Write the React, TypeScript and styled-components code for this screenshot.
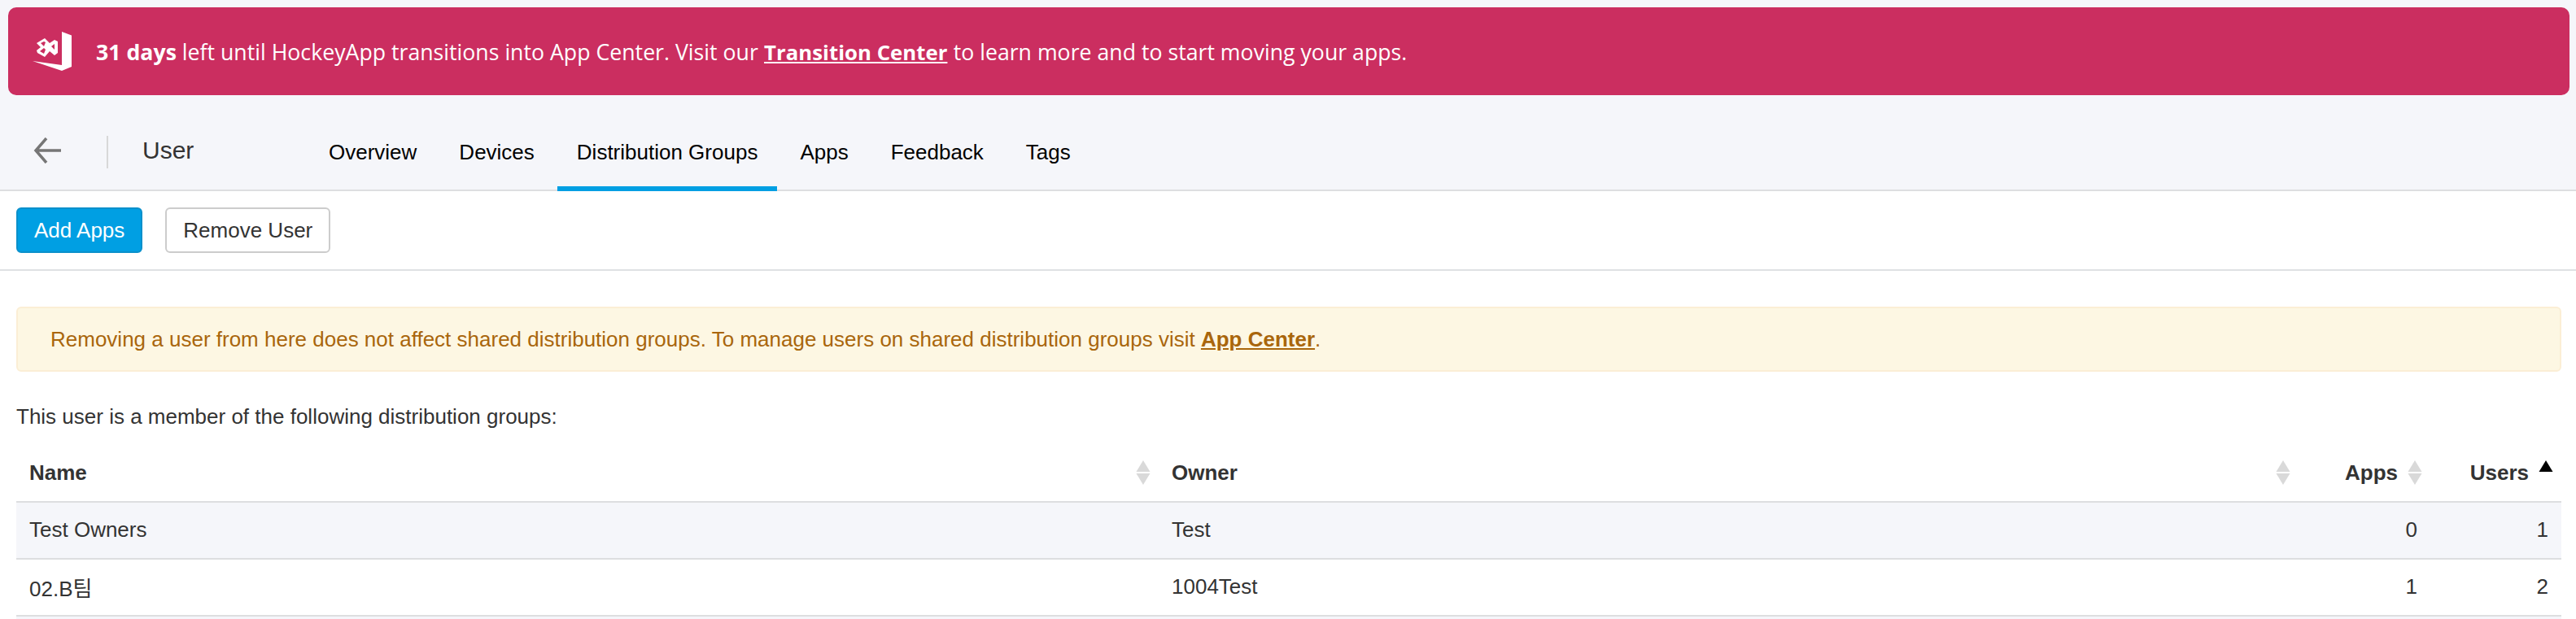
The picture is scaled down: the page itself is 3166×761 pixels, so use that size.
import React from 'react';
import styled, { createGlobalStyle } from 'styled-components';

const Global = createGlobalStyle`
  html, body { margin: 0; padding: 0; background: #fff; }
  body { font-family: "Liberation Sans", Arial, "Noto Sans CJK KR", sans-serif; font-size: 26px; color: #333; overflow: hidden; }
`;
const Top = styled.div`
  background: #f5f6fa;
  border-bottom: 2px solid #dddee0;
  height: 235px;
  padding: 9px 8px 0 10px;
  box-sizing: border-box;
`;
const Banner = styled.div`
  height: 108px;
  background: #cb2e60;
  border-radius: 10px;
  display: flex;
  align-items: center;
  padding-left: 30px;
  color: #fff;
  font-family: "Open Sans", sans-serif;
  font-size: 26.7px;
  a { color: #fff; font-size: 25.8px; font-weight: 700; text-decoration: underline; margin: 0 0.28em; }
  b { font-weight: 700; }
`;
const Logo = styled.svg`
  width: 48px;
  height: 48px;
  margin-right: 30px;
  flex: none;
`;
const Nav = styled.nav`
  display: flex;
  align-items: flex-start;
  height: 100px;
  margin: 18px -8px 0 -10px;
`;
const Back = styled.div`
  width: 131px;
  height: 100px;
  padding: 34px 0 0 41px;
  box-sizing: border-box;
  color: #767676;
  svg { display: block; }
`;
const Title = styled.div`
  width: 249px;
  height: 40px;
  margin-top: 32px;
  padding-left: 42px;
  box-sizing: border-box;
  border-left: 2px solid #d8d8d8;
  font-size: 30px;
  line-height: 36px;
  color: #333;
`;
const Tab = styled.a<{ $active?: boolean }>`
  display: block;
  padding: 37px 24px 0;
  margin-right: 4px;
  font-size: 26px;
  color: #000;
  line-height: 30px;
  height: 100px;
  box-sizing: border-box;
  border-bottom: 6px solid ${p => (p.$active ? '#009fe3' : 'transparent')};
`;
const Toolbar = styled.div`
  display: flex;
  gap: 28px;
  padding: 20px;
  height: 98px;
  box-sizing: border-box;
  border-bottom: 2px solid #dfe1e3;
`;
const Btn = styled.button<{ $primary?: boolean }>`
  height: 56px;
  padding: 0 20px;
  border-radius: 6px;
  font: 26px "Liberation Sans", sans-serif;
  background: ${p => (p.$primary ? '#009fe3' : '#fff')};
  color: ${p => (p.$primary ? '#fff' : '#333')};
  border: 2px solid ${p => (p.$primary ? '#0b90cb' : '#ccc')};
`;
const Body = styled.div`
  padding: 44px 18px 0 20px;
`;
const Alert = styled.div`
  height: 80px;
  box-sizing: border-box;
  background: #fdf7e3;
  border: 2px solid #fbeed5;
  border-radius: 6px;
  color: #a9660c;
  padding-left: 40px;
  line-height: 76px;
  a { color: #a9660c; font-weight: 700; text-decoration: underline; }
`;
const Intro = styled.p`
  margin: 40px 0 0;
  line-height: 30px;
  height: 59px;
`;
const Table = styled.table`
  width: 100%;
  table-layout: fixed;
  border-collapse: separate;
  border-spacing: 0;
`;
const Th = styled.th<{ $w?: number; $right?: boolean }>`
  width: ${p => (p.$w ? p.$w + 'px' : 'auto')};
  height: 62px;
  box-sizing: border-box;
  padding: 0 ${p => (p.$right ? '40px' : '16px')} 10px 16px;
  text-align: ${p => (p.$right ? 'right' : 'left')};
  position: relative;
  font-weight: 700;
  border-bottom: 2px solid #dddee0;
`;
const Td = styled.td<{ $right?: boolean }>`
  height: 70px;
  box-sizing: border-box;
  padding: 0 16px 2px;
  text-align: ${p => (p.$right ? 'right' : 'left')};
  border-bottom: 2px solid #dddee0;
`;
const Tr = styled.tr<{ $alt?: boolean }>`
  background: ${p => (p.$alt ? '#f5f6fa' : '#fff')};
`;
const Filler = styled.td`
  height: 3px;
  padding: 0;
  background: #f5f6fa;
`;
const SortIcon = styled.svg`
  position: absolute;
  right: 10px;
  top: 10px;
  width: 18px;
  height: 32px;
`;

const Sort = ({ up }: { up?: boolean }) => (
  <SortIcon viewBox="0 0 18 32">
    <path d="M9 0 L17.5 14 H.5 Z" fill={up ? '#000' : '#d9d9d9'} />
    {!up && <path d="M.5 16 H17.5 L9 30 Z" fill="#d9d9d9" />}
  </SortIcon>
);

export default function App() {
  return (
    <>
      <Global />
      <Top>
        <Banner>
          <Logo viewBox="0 0 48 48">
            <path fill="#fff" d="M36 0 L48 4.5 V43 L36 48 L0 36 L36 41 Z" />
            <path fill="#fff" fillRule="evenodd" d="M5 14 L15 8 L21 14 L27 10 L31 12 V26 L27 29 L21 24 L15 31 L6 26 L5 23 L10 19 Z M10 14 L14 18 L16 13 L14 12 Z M9 24 L14 27 L16 22 L14 20 Z M23 18 L27 22 V15 Z" />
          </Logo>
          <span>
            <b>31 days</b> left until HockeyApp transitions into App Center. Visit our<a>Transition Center</a>to learn more and to start moving your apps.
          </span>
        </Banner>
        <Nav>
          <Back>
            <svg width="34" height="32" viewBox="0 0 34 32" fill="none" stroke="currentColor" strokeWidth="3.5">
              <path d="M34 16 H3 M16 1 L3 16 L16 31" />
            </svg>
          </Back>
          <Title>User</Title>
          <Tab>Overview</Tab>
          <Tab>Devices</Tab>
          <Tab $active>Distribution Groups</Tab>
          <Tab>Apps</Tab>
          <Tab>Feedback</Tab>
          <Tab>Tags</Tab>
        </Nav>
      </Top>
      <Toolbar>
        <Btn $primary>Add Apps</Btn>
        <Btn>Remove User</Btn>
      </Toolbar>
      <Body>
        <Alert>
          Removing a user from here does not affect shared distribution groups. To manage users on shared distribution groups visit <a>App Center</a>.
        </Alert>
        <Intro>This user is a member of the following distribution groups:</Intro>
        <Table>
          <thead>
            <tr>
              <Th $w={1404}>Name<Sort /></Th>
              <Th>Owner<Sort /></Th>
              <Th $w={162} $right>Apps<Sort /></Th>
              <Th $w={161} $right>Users<Sort up /></Th>
            </tr>
          </thead>
          <tbody>
            <Tr $alt><Td>Test Owners</Td><Td>Test</Td><Td $right>0</Td><Td $right>1</Td></Tr>
            <Tr><Td>02.B팀</Td><Td>1004Test</Td><Td $right>1</Td><Td $right>2</Td></Tr>
            <tr><Filler colSpan={4} /></tr>
          </tbody>
        </Table>
      </Body>
    </>
  );
}
